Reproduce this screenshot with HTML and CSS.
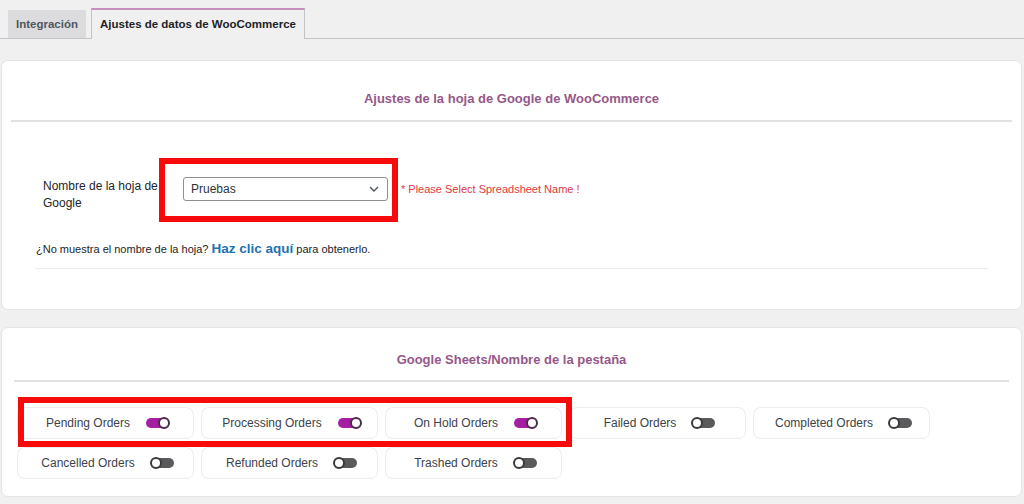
FILE: index.html
```html
<!DOCTYPE html>
<html lang="es">
<head>
<meta charset="utf-8">
<link rel="stylesheet" href="styles.css">
</head>
<body>
<div class="tabs">
  <a class="tab">Integración</a>
  <a class="tab active">Ajustes de datos de WooCommerce</a>
</div>

<section class="card card-sheet">
  <h2 class="card-title">Ajustes de la hoja de Google de WooCommerce</h2>
  <hr class="rule">
  <div class="form-row">
    <label class="form-label">Nombre de la hoja de Google</label>
    <div class="select-holder">
      <div class="select">
        <span>Pruebas</span>
        <svg class="chev" width="12" height="8" viewBox="0 0 12 8"><path d="M2 2 L6 6 L10 2" fill="none" stroke="#50575e" stroke-width="1.4"/></svg>
      </div>
      <span class="annot annot-select"></span>
    </div>
    <span class="error">* Please Select Spreadsheet Name !</span>
  </div>
  <p class="help">¿No muestra el nombre de la hoja? <a class="help-link">Haz clic aquí</a> para obtenerlo.</p>
  <hr class="rule light">
</section>

<section class="card card-tabs">
  <h2 class="card-title">Google Sheets/Nombre de la pestaña</h2>
  <hr class="rule">
  <div class="pills-wrap">
    <div class="pills">
      <div class="pill"><span>Pending Orders</span><i class="toggle on"></i></div>
      <div class="pill"><span>Processing Orders</span><i class="toggle on"></i></div>
      <div class="pill"><span>On Hold Orders</span><i class="toggle on"></i></div>
      <div class="pill"><span>Failed Orders</span><i class="toggle"></i></div>
      <div class="pill"><span>Completed Orders</span><i class="toggle"></i></div>
      <div class="pill"><span>Cancelled Orders</span><i class="toggle"></i></div>
      <div class="pill"><span>Refunded Orders</span><i class="toggle"></i></div>
      <div class="pill"><span>Trashed Orders</span><i class="toggle"></i></div>
    </div>
    <span class="annot annot-pills"></span>
  </div>
</section>
</body>
</html>
```

FILE: styles.css
```css
* { box-sizing: border-box; }
html, body { margin: 0; padding: 0; }
body {
  background: #f0f0f1;
  font-family: "Liberation Sans", Arial, sans-serif;
  color: #1d2327;
  width: 1024px;
  height: 504px;
  overflow: hidden;
}
.tabs {
  display: flex;
  align-items: flex-end;
  gap: 5px;
  padding: 8px 0 0 8px;
  border-bottom: 1px solid #c3c4c7;
  height: 39px;
}
.tab {
  font-size: 11.5px;
  font-weight: bold;
  height: 28px;
  line-height: 27px;
  padding: 0 7px 0 7px;
  background: #dcdcde;
  color: #50575e;
  border: 1px solid #dcdcde;
  border-bottom: none;
}
.tab.active {
  height: 31px;
  line-height: 28px;
  background: #f0f0f1;
  color: #1d2327;
  border: 1px solid #c3c4c7;
  border-top: 2px solid #c48fbb;
  border-bottom: none;
  margin-bottom: -1px;
  padding: 0 8px 0 8px;
}
.card {
  background: #fff;
  margin: 0 2px 0 1px;
  border-radius: 7px;
  border: 1px solid #e4e4e6;
  padding: 0 9px 0 9px;
}
.card-sheet { margin-top: 21px; height: 250px; padding-top: 29px; }
.card-tabs { margin-top: 17px; height: 170px; padding-top: 23px; }
.card-title {
  margin: 0;
  text-align: center;
  font-size: 13px;
  line-height: 18px;
  font-weight: bold;
  color: #96588a;
}
.rule {
  border: none;
  height: 2px;
  background: #e2e2e4;
  margin: 12px 0 0 0;
}
.card-tabs .rule { margin-top: 11px; margin-left: 3px; margin-right: 3px; }
.rule.light {
  height: 1px;
  background: #ececee;
  margin: 12px 24px 0 24px;
}
.form-row {
  display: flex;
  align-items: center;
  margin-top: 44px;
  padding-left: 32px;
}
.form-label {
  width: 140px;
  padding-right: 24px;
  font-size: 12px;
  line-height: 17px;
  font-weight: 500;
  color: #1d2327;
  margin-top: 12px;
}
.select-holder { position: relative; }
.select {
  width: 205px;
  height: 24px;
  border: 1px solid #8c8f94;
  border-radius: 3px;
  display: flex;
  align-items: center;
  justify-content: space-between;
  padding: 0 7px 0 7px;
  font-size: 12px;
  color: #2c3338;
}
.chev { display: block; }
.annot {
  position: absolute;
  border: 6px solid #f70a0a;
  pointer-events: none;
}
.annot-select { left: -24px; right: -10px; top: -19px; bottom: -21px; }
.error {
  margin-left: 13px;
  font-size: 11px;
  color: #e0393e;
}
.help {
  margin: 29px 0 0 25px;
  font-size: 11px;
  color: #1d2327;
}
.help-link {
  color: #2271b1;
  font-weight: bold;
  font-size: 13.5px;
}
.pills-wrap {
  position: relative;
  margin-top: 25px;
  padding-left: 6px;
}
.pills {
  display: grid;
  grid-template-columns: repeat(5, 177px);
  grid-auto-rows: 32px;
  column-gap: 7px;
  row-gap: 8px;
}
.pill {
  border: 1px solid #ececee;
  border-radius: 8px;
  display: flex;
  align-items: center;
  justify-content: center;
  gap: 16px;
  font-size: 12px;
  color: #3c434a;
  padding-left: 4px;
}
.toggle {
  display: block;
  position: relative;
  width: 23px;
  height: 10px;
  border-radius: 6px;
  background: #5a5a5c;
}
.toggle::after {
  content: "";
  position: absolute;
  top: -1px;
  left: -1px;
  width: 12px;
  height: 12px;
  border-radius: 50%;
  background: #fff;
  border: 2px solid #3a3a3c;
  box-sizing: border-box;
}
.toggle.on { background: #a71ea3; }
.toggle.on::after { left: auto; right: -1px; border-color: #4a2a48; }
.annot-pills { left: 7px; top: -10px; width: 554px; height: 50px; }
```
